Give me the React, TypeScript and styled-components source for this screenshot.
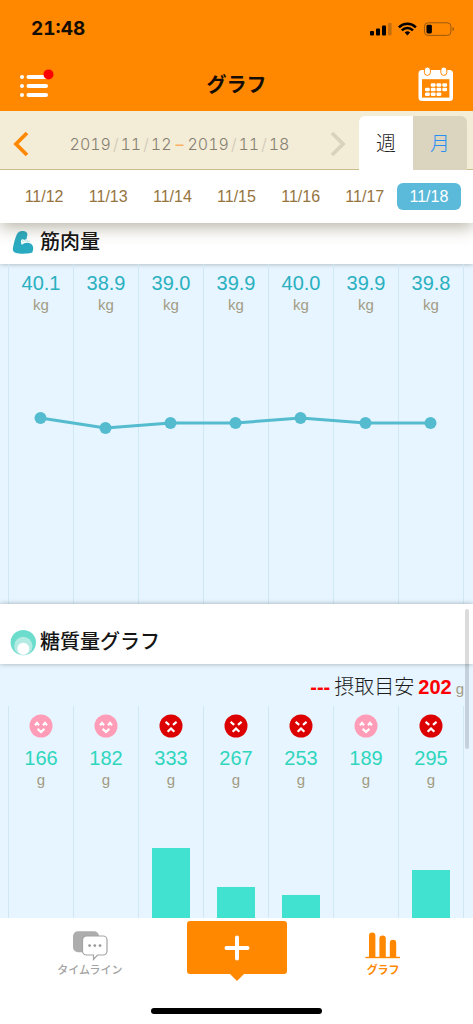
import React from "react";
import styled, { createGlobalStyle } from "styled-components";

const GlobalStyle = createGlobalStyle`
  *, *::before, *::after { box-sizing: border-box; }
  body { margin: 0; background: #fff; }
  button { border: 0; padding: 0; margin: 0; background: none; font: inherit; color: inherit; cursor: pointer; }
  h1, h2, p { margin: 0; font: inherit; }
  svg { display: block; }
`;

const latin = `"Liberation Sans", "Noto Sans CJK JP", sans-serif`;
const japanese = `"Noto Sans CJK JP", sans-serif`;
const rounded = `Inter, "Noto Sans CJK JP", sans-serif`;

const Screen = styled.div`
  display: flex;
  flex-direction: column;
  height: 100vh;
  background: #fff;
  font-family: ${latin};
`;

const TopArea = styled.header`
  background: #ff8800;
  color: #140d05;
`;

const StatusBar = styled.div`
  display: flex;
  align-items: center;
  justify-content: space-between;
  height: 56px;
  padding: 2px 17px 0 31px;
  font: 700 19px/24px ${rounded};
  font-variant-numeric: tabular-nums;
`;

const NavBar = styled.div`
  display: grid;
  grid-template-columns: 36px 1fr 36px;
  align-items: center;
  height: 55px;
  padding: 0 19px;
`;

const NavTitle = styled.h1`
  font: 700 20px/28px ${japanese};
  text-align: center;
`;

const PeriodBar = styled.div`
  display: flex;
  align-items: flex-end;
  height: 59px;
  padding: 0 6px 0 0;
  background: #f3ecd7;
  box-shadow: inset 0 -1px 0 #c9bd8c;
`;

const ArrowButton = styled.button`
  display: grid;
  place-items: center;
  width: 42px;
  height: 52px;
`;

const PeriodText = styled.p`
  flex: 1;
  display: flex;
  justify-content: center;
  align-items: center;
  gap: 2px;
  height: 52px;
  color: #857f72;
  font: 300 16px/20px ${rounded};
  font-variant-numeric: tabular-nums;
`;

const Slash = styled.span`
  color: #cfc8b6;
`;

const Dash = styled.span`
  margin: 0 2px;
  color: #fab060;
  font-weight: 500;
`;

const RangeTab = styled.button<{ $active?: boolean }>`
  width: 54px;
  height: 54px;
  border-radius: ${(p) => (p.$active ? "6px 0 0 0" : "0 6px 0 0")};
  background: ${(p) => (p.$active ? "#fff" : "#dbd4be")};
  color: ${(p) => (p.$active ? "#222" : "#2890f5")};
  font: 300 20px/54px ${japanese};
`;

const Days = styled.nav`
  position: relative;
  z-index: 1;
  display: grid;
  grid-template-columns: repeat(7, 1fr);
  height: 53px;
  padding: 13px 12px;
  background: #fff;
  box-shadow: 0 4px 16px rgba(90, 85, 50, 0.45);
  clip-path: inset(0 0 -30px 0);
`;

const Day = styled.button<{ $selected?: boolean }>`
  height: 27px;
  border-radius: 6px;
  background: ${(p) => (p.$selected ? "#5bbad9" : "transparent")};
  color: ${(p) => (p.$selected ? "#fff" : "#957440")};
  font: 16px/26px ${latin};
`;

const Content = styled.main`
  position: relative;
  flex: 1;
  min-height: 0;
  display: flex;
  flex-direction: column;
  overflow: hidden;
`;

const ScrollThumb = styled.div`
  position: absolute;
  top: 386px;
  right: 4px;
  width: 4px;
  height: 140px;
  border-radius: 2px;
  background: rgba(0, 0, 0, 0.14);
`;

const SectionHead = styled.div<{ $height: number }>`
  flex: none;
  position: relative;
  display: flex;
  align-items: flex-end;
  gap: 4px;
  height: ${(p) => p.$height}px;
  padding: 0 10px 8px;
  background: #fff;
  box-shadow: 0 0 5px rgba(0, 0, 0, 0.3);
`;

const SectionTitle = styled.h2`
  color: #151515;
  font: 500 20px/30px ${japanese};
`;

const Panel = styled.section<{ $height?: number }>`
  display: flex;
  flex-direction: column;
  flex: ${(p) => (p.$height ? "none" : "1")};
  height: ${(p) => (p.$height ? `${p.$height}px` : "auto")};
  min-height: 0;
  padding: 0 9px 0 8px;
  background: #e6f5ff;
`;

const Columns = styled.div`
  position: relative;
  flex: 1;
  display: grid;
  grid-template-columns: repeat(7, 1fr);
  border-right: 1px solid #cfe8f4;
`;

const Column = styled.div`
  display: flex;
  flex-direction: column;
  align-items: center;
  padding-top: 8px;
  border-left: 1px solid #cfe8f4;
`;

const Value = styled.span<{ $color: string }>`
  color: ${(p) => p.$color};
  font: 20px/22px ${latin};
`;

const Unit = styled.span`
  color: #a39b84;
  font: 15px/22px ${latin};
`;

const Trend = styled.svg`
  position: absolute;
  top: 0;
  left: 0;
  width: 100%;
  height: 100%;
`;

const Legend = styled.p`
  display: flex;
  align-items: baseline;
  justify-content: flex-end;
  gap: 4px;
  height: 42px;
  padding-top: 7px;
  color: #1c1c1c;
  font: 300 20px/30px ${japanese};
`;

const Goal = styled.strong`
  color: #ff0000;
  font: 700 20px/30px ${latin};
`;

const Face = styled.svg`
  width: 24px;
  height: 24px;
  margin-bottom: 9px;
`;

const Bar = styled.div`
  width: 38px;
  margin-top: auto;
  background: #41e2d0;
`;

const TabBar = styled.nav`
  display: flex;
  justify-content: center;
  height: 90px;
  background: #fff;
`;

const Tab = styled.button<{ $active?: boolean }>`
  display: flex;
  flex-direction: column;
  align-items: center;
  width: 31%;
  height: 62px;
  padding-top: 13px;
  color: ${(p) => (p.$active ? "#ff8800" : "#a3a3a3")};
  font: ${(p) => (p.$active ? 700 : 500)} 11px/16px ${japanese};
`;

const AddSlot = styled.div`
  display: flex;
  justify-content: center;
  width: 31%;
  padding-top: 3px;
`;

const AddButton = styled.button`
  position: relative;
  display: grid;
  place-items: center;
  width: 100px;
  height: 53px;
  border-radius: 3px;
  background: #ff8800;

  &::after {
    content: "";
    position: absolute;
    top: 100%;
    border: 7px solid transparent;
    border-top-color: #ff8800;
    border-bottom: 0;
  }
`;

const HomeArea = styled.div`
  display: flex;
  justify-content: center;
  height: 16px;
`;

const HomeIndicator = styled.div`
  width: 36%;
  height: 6px;
  border-radius: 3px;
  background: #000;
`;

const StatusIcons = () => (
  <svg width="86" height="16" viewBox="0 0 86 16" aria-hidden="true">
    <rect x="0" y="10" width="4" height="4.5" rx="1" fill="#000" />
    <rect x="6" y="7.5" width="4" height="7" rx="1" fill="#000" />
    <rect x="12" y="4.5" width="4" height="10" rx="1" fill="#000" />
    <rect x="18" y="2" width="3.6" height="12.5" rx="1" fill="#c56e0c" />
    <g fill="none" stroke="#000" strokeWidth="2.5">
      <path d="M28.9 6.3a12.2 12.2 0 0 1 17 0" />
      <path d="M31.8 9.4a8 8 0 0 1 11.2 0" />
    </g>
    <path d="M37.4 14.4l-2.7-2.8a4 4 0 0 1 5.4 0z" fill="#000" />
    <rect x="54.5" y="1.8" width="26.4" height="12.6" rx="3.5" fill="none" stroke="#9b5a10" strokeWidth="1" />
    <rect x="56.5" y="3.8" width="5.4" height="8.6" rx="1.4" fill="#000" />
    <path d="M82.5 6v4.2a2.2 2.2 0 0 0 0-4.2z" fill="#9b5a10" />
  </svg>
);

const MenuIcon = () => (
  <svg width="36" height="30" viewBox="0 0 36 30" aria-hidden="true">
    <g fill="#fff">
      {[8, 17, 26].map((y) => (
        <React.Fragment key={y}>
          <circle cx="3" cy={y} r="2" />
          <rect x="7.5" y={y - 2} width="21.5" height="4" rx="2" />
        </React.Fragment>
      ))}
    </g>
    <circle cx="29.5" cy="5.4" r="5" fill="#ff0000" />
  </svg>
);

const CalendarIcon = () => (
  <svg width="36" height="36" viewBox="0 0 36 36" aria-hidden="true">
    <rect x="0.5" y="4" width="34.5" height="31" rx="3.5" fill="#fff" />
    <rect x="4" y="13.2" width="27.4" height="18.4" fill="#ff8800" />
    <g fill="#fff" stroke="#ff8800" strokeWidth="1">
      <rect x="6.4" y="1" width="6" height="8.4" rx="3" />
      <rect x="22.8" y="1" width="6" height="8.4" rx="3" />
    </g>
    <g fill="#fff">
      {[
        [12.8, 17.2], [18.5, 17.2], [24.3, 17.2],
        [7, 21.8], [12.8, 21.8], [18.5, 21.8], [24.3, 21.8],
        [7, 26.4], [12.8, 26.4], [18.5, 26.4],
      ].map(([x, y]) => (
        <rect key={`${x}-${y}`} x={x} y={y} width="4.8" height="3.5" rx="1.2" />
      ))}
    </g>
  </svg>
);

const Chevron = ({ back }: { back?: boolean }) => (
  <svg width="16" height="26" viewBox="0 0 16 26" aria-hidden="true">
    <path
      d={back ? "M14 2L3 13l11 11" : "M2 2l11 11L2 24"}
      fill="none"
      stroke={back ? "#ff8800" : "#d9d2bc"}
      strokeWidth="3.8"
    />
  </svg>
);

const MuscleIcon = () => (
  <svg width="26" height="28" viewBox="0 0 26 28" aria-hidden="true">
    <path
      d="M12 3C14.5 2.6 17.6 4 17.4 6.6C17.4 8.4 16.4 9 16.8 10C16.9 11.4 15 12 13.4 11.4C11.8 10.9 11 11.8 11 13.5C11 14.8 11.2 16 11.8 17C13.5 15 16.5 14.2 19 15C22 15.8 23.6 18 23.2 21L22.4 24.6C18 26 10 26.3 5.5 24.8C3 23.8 2.5 22 3 19.5C4 15 5 10 6.8 6.5C7.8 4.2 9.6 3.2 12 3Z"
      fill="#2aaac0"
    />
    <path
      d="M12.6 12.6l.6 1.4M15 12.2l.2 1.5M17.4 12.2l-.4 1.4M19.4 12.8l-.8 1.2"
      stroke="#7fcbd8"
      strokeWidth="0.8"
    />
  </svg>
);

const SugarIcon = () => (
  <svg width="26" height="28" viewBox="0 0 26 28" aria-hidden="true">
    <circle cx="13.3" cy="14.6" r="12.7" fill="#6cdccd" />
    <circle cx="13.3" cy="17.9" r="9.2" fill="#b3ebe3" />
    <circle cx="13.3" cy="20.8" r="6" fill="#fff" />
  </svg>
);

const FaceIcon = ({ over }: { over: boolean }) => (
  <Face viewBox="0 0 24 24" role="img" aria-label={over ? "over" : "ok"}>
    <circle cx="12" cy="12" r="11.5" fill={over ? "#dc0000" : "#ff9db8"} />
    <path
      d={
        over
          ? "M6.6 7.9l3.6 3M17.6 7.9l-3.6 3M8.6 17.7l3.4-3.1 3.4 3.1"
          : "M6 11.3l2-2.4 2 2.4M14 11.3l2-2.4 2 2.4M8.6 14.9l3.4 3.1 3.4-3.1"
      }
      fill="none"
      stroke="#fff"
      strokeWidth="2.2"
    />
  </Face>
);

const ChatIcon = () => (
  <svg width="36" height="30" viewBox="0 0 36 30" aria-hidden="true">
    <rect x="1" y="0.3" width="26" height="21" rx="5" fill="#adadad" />
    <path
      d="M14.5 5h16.500a4 4 0 0 1 4 4v11a4 4 0 0 1-4 4h-5.500l-4 4.400V24h-7a4 4 0 0 1-4-4V9a4 4 0 0 1 4-4z"
      fill="#fff"
      stroke="#a3a3a3"
      strokeWidth="1.2"
    />
    <g fill="#999">
      <circle cx="17.6" cy="14.6" r="1.4" />
      <circle cx="22.8" cy="14.6" r="1.4" />
      <circle cx="28" cy="14.6" r="1.4" />
    </g>
  </svg>
);

const BarsIcon = () => (
  <svg width="36" height="30" viewBox="0 0 36 30" aria-hidden="true">
    <g fill="#ff8800">
      <path d="M4 26V4.600a3 3 0 0 1 6.400 0V26z" />
      <path d="M14.400 26V7.600a3 3 0 0 1 6.400 0V26z" />
      <path d="M24.800 26V12a3 3 0 0 1 6.400 0V26z" />
      <rect x="0.5" y="25.8" width="34.5" height="1.4" />
    </g>
  </svg>
);

const days = ["11/12", "11/13", "11/14", "11/15", "11/16", "11/17", "11/18"];
const muscle = [40.1, 38.9, 39.0, 39.9, 40.0, 39.9, 39.8];
const trendY = [154, 164, 159, 159, 154, 159, 159];
const sugar = [166, 182, 333, 267, 253, 189, 295];
const sugarGoal = 202;

const columnX = (i: number) => `${((i + 0.5) / 7) * 100}%`;
const barHeight = (grams: number) => Math.max(0, Math.round((grams - 214) * 0.588));

const DateText = ({ parts }: { parts: string[] }) => (
  <>
    <span>{parts[0]}</span>
    <Slash>/</Slash>
    <span>{parts[1]}</span>
    <Slash>/</Slash>
    <span>{parts[2]}</span>
  </>
);

export default function App() {
  return (
    <Screen>
      <GlobalStyle />
      <TopArea>
        <StatusBar>
          <span>21:48</span>
          <StatusIcons />
        </StatusBar>
        <NavBar>
          <button aria-label="menu"><MenuIcon /></button>
          <NavTitle>グラフ</NavTitle>
          <button aria-label="calendar"><CalendarIcon /></button>
        </NavBar>
      </TopArea>

      <PeriodBar>
        <ArrowButton aria-label="previous"><Chevron back /></ArrowButton>
        <PeriodText>
          <DateText parts={["2019", "11", "12"]} />
          <Dash>–</Dash>
          <DateText parts={["2019", "11", "18"]} />
        </PeriodText>
        <ArrowButton aria-label="next"><Chevron /></ArrowButton>
        <RangeTab $active>週</RangeTab>
        <RangeTab>月</RangeTab>
      </PeriodBar>

      <Days>
        {days.map((day, i) => (
          <Day key={day} $selected={i === 6}>{day}</Day>
        ))}
      </Days>

      <Content>
        <SectionHead $height={41}>
          <MuscleIcon />
          <SectionTitle>筋肉量</SectionTitle>
        </SectionHead>
        <Panel $height={340}>
          <Columns>
            {muscle.map((kg, i) => (
              <Column key={days[i]}>
                <Value $color="#2ab0c0">{kg.toFixed(1)}</Value>
                <Unit>kg</Unit>
              </Column>
            ))}
            <Trend aria-hidden="true">
              {trendY.slice(1).map((y, i) => (
                <line
                  key={i}
                  x1={columnX(i)}
                  y1={trendY[i]}
                  x2={columnX(i + 1)}
                  y2={y}
                  stroke="#55bccf"
                  strokeWidth="3"
                />
              ))}
              {trendY.map((y, i) => (
                <circle key={i} cx={columnX(i)} cy={y} r="6" fill="#55bccf" />
              ))}
            </Trend>
          </Columns>
        </Panel>

        <SectionHead $height={60}>
          <SugarIcon />
          <SectionTitle>糖質量グラフ</SectionTitle>
        </SectionHead>
        <Panel>
          <Legend>
            <Goal>---</Goal>
            <span>摂取目安</span>
            <Goal>{sugarGoal}</Goal>
            <Unit>g</Unit>
          </Legend>
          <Columns>
            {sugar.map((grams, i) => (
              <Column key={days[i]}>
                <FaceIcon over={grams > sugarGoal} />
                <Value $color="#2fd6bd">{grams}</Value>
                <Unit>g</Unit>
                <Bar style={{ height: barHeight(grams) }} />
              </Column>
            ))}
          </Columns>
        </Panel>
        <ScrollThumb />
      </Content>

      <TabBar>
        <Tab>
          <ChatIcon />
          タイムライン
        </Tab>
        <AddSlot>
          <AddButton aria-label="add">
            <svg width="26" height="26" viewBox="0 0 26 26" aria-hidden="true">
              <path d="M13 2.500v21M2.500 13h21" stroke="#fff" strokeWidth="4" strokeLinecap="round" />
            </svg>
          </AddButton>
        </AddSlot>
        <Tab $active>
          <BarsIcon />
          グラフ
        </Tab>
      </TabBar>
      <HomeArea>
        <HomeIndicator />
      </HomeArea>
    </Screen>
  );
}
